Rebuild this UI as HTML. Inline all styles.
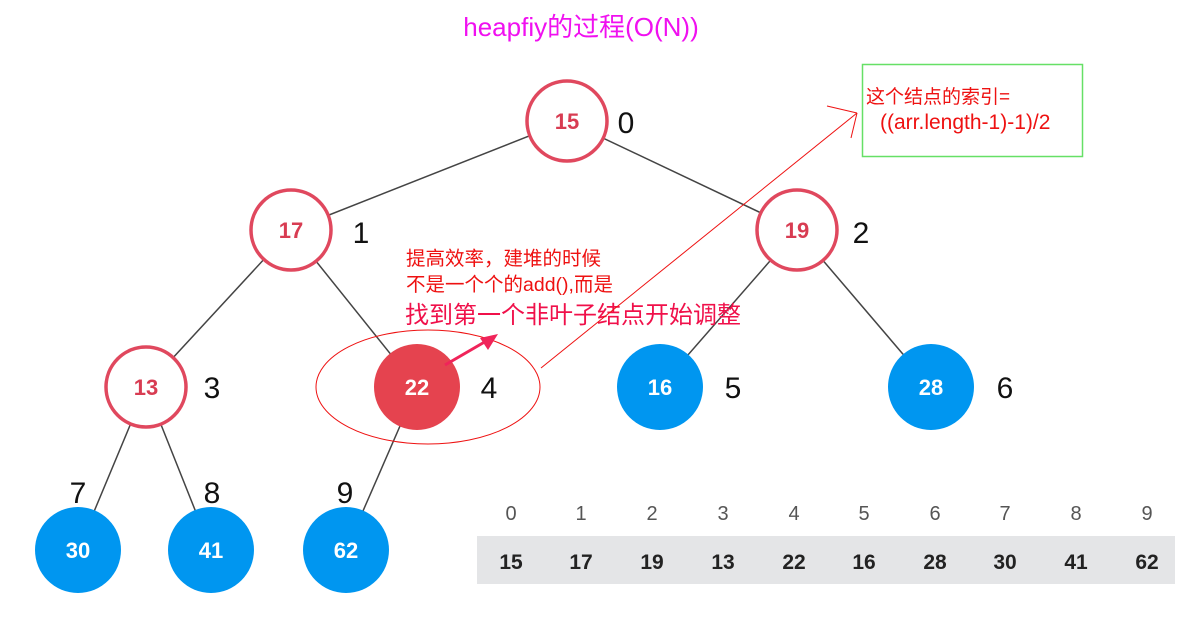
<!DOCTYPE html>
<html><head><meta charset="utf-8"><style>
html,body{margin:0;padding:0;background:#fff;width:1198px;height:619px;overflow:hidden}
svg{display:block}
</style></head><body>
<svg width="1198" height="619" viewBox="0 0 1198 619" xmlns="http://www.w3.org/2000/svg" font-family="Liberation Sans, Noto Sans CJK SC, sans-serif">
<rect x="0" y="0" width="1198" height="619" fill="#fff"/>
<text x="581" y="36" text-anchor="middle" font-size="26" fill="#f010f0">heapfiy的过程(O(N))</text>
<g stroke="#444" stroke-width="1.5">
<line x1="567" y1="121" x2="291" y2="230"/><line x1="567" y1="121" x2="797" y2="230"/>
<line x1="291" y1="230" x2="146" y2="387"/><line x1="291" y1="230" x2="417" y2="387"/>
<line x1="797" y1="230" x2="660" y2="387"/><line x1="797" y1="230" x2="931" y2="387"/>
<line x1="146" y1="387" x2="78" y2="550"/><line x1="146" y1="387" x2="211" y2="550"/>
<line x1="417" y1="387" x2="346" y2="550"/>
</g>
<g stroke="#e0485e" stroke-width="3.5" fill="#fff">
<circle cx="567" cy="121" r="40"/><circle cx="291" cy="230" r="40"/><circle cx="797" cy="230" r="40"/><circle cx="146" cy="387" r="40"/>
</g>
<circle cx="417" cy="387" r="43" fill="#e5434f"/>
<g fill="#0096f0">
<circle cx="660" cy="387" r="43"/><circle cx="931" cy="387" r="43"/><circle cx="78" cy="550" r="43"/><circle cx="211" cy="550" r="43"/><circle cx="346" cy="550" r="43"/>
</g>
<g font-size="22" font-weight="bold" text-anchor="middle">
<g fill="#d83c52"><text x="567" y="129">15</text><text x="291" y="238">17</text><text x="797" y="238">19</text><text x="146" y="395">13</text></g>
<g fill="#fff"><text x="417" y="395">22</text><text x="660" y="395">16</text><text x="931" y="395">28</text><text x="78" y="558">30</text><text x="211" y="558">41</text><text x="346" y="558">62</text></g>
</g>
<g font-size="30" fill="#111" text-anchor="middle">
<text x="626" y="133">0</text><text x="361" y="243">1</text><text x="861" y="243">2</text><text x="212" y="398">3</text><text x="489" y="398">4</text><text x="733" y="398">5</text><text x="1005" y="398">6</text><text x="78" y="503">7</text><text x="212" y="503">8</text><text x="345" y="503">9</text>
</g>
<rect x="477" y="536" width="698" height="48" fill="#e4e5e7"/>
<g font-size="20" fill="#555" text-anchor="middle">
<text x="511" y="520">0</text><text x="581" y="520">1</text><text x="652" y="520">2</text><text x="723" y="520">3</text><text x="794" y="520">4</text><text x="864" y="520">5</text><text x="935" y="520">6</text><text x="1005" y="520">7</text><text x="1076" y="520">8</text><text x="1147" y="520">9</text>
</g>
<g font-size="21" font-weight="bold" fill="#222" text-anchor="middle">
<text x="511" y="569">15</text><text x="581" y="569">17</text><text x="652" y="569">19</text><text x="723" y="569">13</text><text x="794" y="569">22</text><text x="864" y="569">16</text><text x="935" y="569">28</text><text x="1005" y="569">30</text><text x="1076" y="569">41</text><text x="1147" y="569">62</text>
</g>
<rect x="862.5" y="64.5" width="220" height="92" fill="none" stroke="#66e066" stroke-width="1.5"/>
<g fill="#ee1111">
<text x="866" y="103" font-size="19">这个结点的索引=</text>
<text x="880" y="129" font-size="21">((arr.length-1)-1)/2</text>
<text x="406" y="265" font-size="19.5">提高效率，建堆的时候</text>
<text x="406" y="291" font-size="19.5">不是一个个的add(),而是</text>
</g>
<text x="405" y="323" font-size="24" fill="#f0104a">找到第一个非叶子结点开始调整</text>
<ellipse cx="428" cy="387" rx="112" ry="57" fill="none" stroke="#ee1111" stroke-width="1"/>
<g stroke="#ee1111" stroke-width="1" fill="none">
<line x1="541" y1="368" x2="857" y2="113"/>
<line x1="827" y1="106" x2="857" y2="113"/>
<line x1="857" y1="113" x2="851" y2="138"/>
</g>
<line x1="445" y1="365" x2="488" y2="340" stroke="#f0245a" stroke-width="3"/>
<polygon points="498,334 480,338 488,350" fill="#f0245a"/>
</svg>
</body></html>
